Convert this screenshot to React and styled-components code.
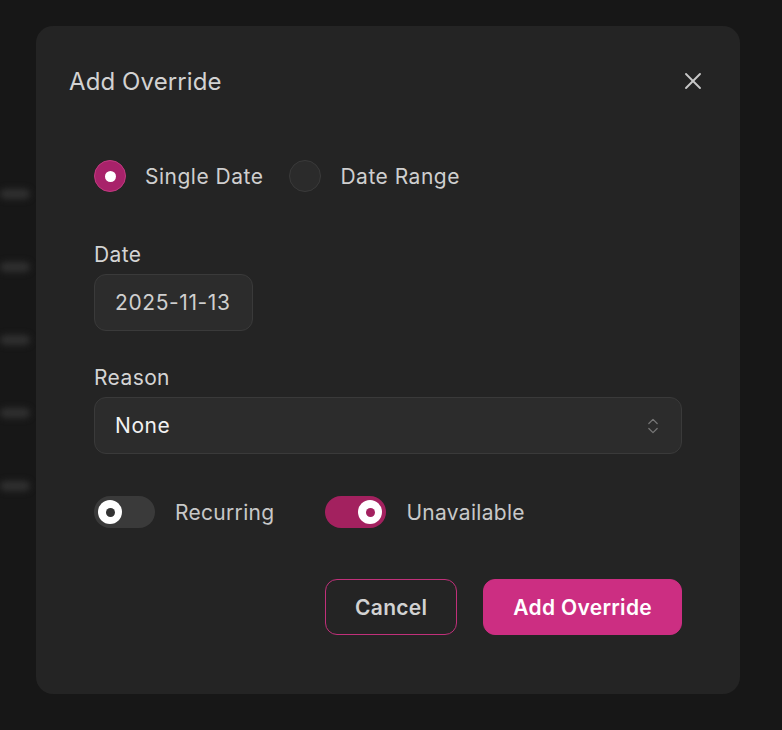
import styled, { createGlobalStyle } from 'styled-components';
import { X, ChevronsUpDown } from 'lucide-react';

const GlobalStyle = createGlobalStyle`
  * { box-sizing: border-box; }
  html, body {
    margin: 0;
    background: #171717;
    font-family: Inter, "Noto Sans", "Liberation Sans", sans-serif;
  }
`;

const Page = styled.div`
  position: relative;
  width: 782px;
  height: 730px;
  overflow: hidden;
  background: #171717;
`;

const Backdrop = styled.aside`
  display: flex;
  flex-direction: column;
  gap: 63px;
  padding: 189px 0 0 0;
  filter: blur(3px);
`;

const Blob = styled.div`
  width: ${(p) => p.w || 30}px;
  height: 10px;
  border-radius: 5px;
  background: #303030;
`;

const Overlay = styled.div`
  position: absolute;
  inset: 0;
  display: flex;
  align-items: flex-start;
  padding: 26px 0 0 36px;
`;

const Modal = styled.div`
  width: 704px;
  height: 668px;
  background: #242424;
  border-radius: 17px;
  padding: 40px 33px 0 33px;
  display: flex;
  flex-direction: column;
`;

const Header = styled.div`
  display: flex;
  align-items: center;
  justify-content: space-between;
  height: 30px;
`;

const Title = styled.h2`
  margin: 0;
  font-size: 24px;
  font-weight: 400;
  color: #d2d2d2;
  letter-spacing: 0.1px;
`;

const Close = styled.button`
  border: 0;
  background: none;
  padding: 0;
  display: flex;
  color: #c8c8c8;
  cursor: pointer;
`;

const Body = styled.div`
  display: flex;
  flex-direction: column;
  padding: 64px 25px 0 25px;
`;

const RadioRow = styled.div`
  display: flex;
  align-items: center;
`;

const RadioItem = styled.label`
  display: flex;
  align-items: center;
  gap: 19px;
  margin-right: 26px;
  font-size: 21px;
  letter-spacing: 0.5px;
  color: #cfcfcf;
`;

const RadioDot = styled.span`
  width: 32px;
  height: 32px;
  border-radius: 50%;
  display: flex;
  align-items: center;
  justify-content: center;
  background: ${(p) => (p.checked ? '#a8226a' : '#2b2b2b')};
  border: 1px solid ${(p) => (p.checked ? '#c23a80' : '#3a3a3a')};
  &::after {
    content: '';
    display: ${(p) => (p.checked ? 'block' : 'none')};
    width: 11px;
    height: 11px;
    border-radius: 50%;
    background: #ffffff;
  }
`;

const Field = styled.div`
  display: flex;
  flex-direction: column;
  align-items: flex-start;
  gap: 7px;
  margin-top: ${(p) => p.top}px;
`;

const Label = styled.div`
  font-size: 21px;
  line-height: 24px;
  letter-spacing: 0.4px;
  color: #d4d4d4;
`;

const Input = styled.div`
  height: 57px;
  width: ${(p) => (p.full ? '100%' : 'auto')};
  display: flex;
  align-items: center;
  justify-content: space-between;
  padding: 0 21px 0 20px;
  background: #2c2c2c;
  border: 1px solid #3a3a3a;
  border-radius: 12px;
  font-size: 21px;
  color: ${(p) => (p.bright ? '#f2f2f2' : '#cfcfcf')};
  letter-spacing: 0.6px;
`;

const Chevron = styled.span`
  display: flex;
  color: #767676;
  margin-right: -3px;
`;

const ToggleRow = styled.div`
  display: flex;
  align-items: center;
  margin-top: 42px;
`;

const ToggleItem = styled.label`
  display: flex;
  align-items: center;
  gap: 20px;
  margin-right: 51px;
  font-size: 21px;
  letter-spacing: 0.3px;
  color: #c8c8c8;
`;

const Track = styled.span`
  width: 61px;
  height: 32px;
  border-radius: 16px;
  padding: 4px;
  display: flex;
  justify-content: ${(p) => (p.on ? 'flex-end' : 'flex-start')};
  background: ${(p) => (p.on ? '#a3215f' : '#3a3a3a')};
`;

const Knob = styled.span`
  width: 24px;
  height: 24px;
  border-radius: 50%;
  background: #ffffff;
  display: flex;
  align-items: center;
  justify-content: center;
  &::after {
    content: '';
    width: 9px;
    height: 9px;
    border-radius: 50%;
    background: ${(p) => (p.on ? '#a3215f' : '#333333')};
  }
`;

const Actions = styled.div`
  display: flex;
  justify-content: flex-end;
  gap: 26px;
  margin-top: 51px;
`;

const Button = styled.button`
  height: 56px;
  padding: 0 29px;
  border-radius: 12px;
  font-family: inherit;
  font-size: 21px;
  font-weight: 600;
  letter-spacing: 0.3px;
  cursor: pointer;
  color: ${(p) => (p.primary ? '#ffffff' : '#d2d2d2')};
  background: ${(p) => (p.primary ? '#cc2e82' : 'transparent')};
  border: 1px solid ${(p) => (p.primary ? '#cc2e82' : '#c0307a')};
`;

export default function App() {
  return (
    <Page>
      <GlobalStyle />
      <Backdrop>
        {[30, 30, 30, 30, 30].map((w, i) => (
          <Blob key={i} w={w} />
        ))}
      </Backdrop>
      <Overlay>
        <Modal>
          <Header>
            <Title>Add Override</Title>
            <Close aria-label="Close">
              <X size={28} strokeWidth={1.6} />
            </Close>
          </Header>
          <Body>
            <RadioRow>
              <RadioItem>
                <RadioDot checked />
                Single Date
              </RadioItem>
              <RadioItem>
                <RadioDot />
                Date Range
              </RadioItem>
            </RadioRow>

            <Field top={51}>
              <Label>Date</Label>
              <Input>2025-11-13</Input>
            </Field>

            <Field top={35}>
              <Label>Reason</Label>
              <Input full bright>
                None
                <Chevron>
                  <ChevronsUpDown size={20} strokeWidth={1.5} />
                </Chevron>
              </Input>
            </Field>

            <ToggleRow>
              <ToggleItem>
                <Track>
                  <Knob />
                </Track>
                Recurring
              </ToggleItem>
              <ToggleItem>
                <Track on>
                  <Knob on />
                </Track>
                Unavailable
              </ToggleItem>
            </ToggleRow>

            <Actions>
              <Button>Cancel</Button>
              <Button primary>Add Override</Button>
            </Actions>
          </Body>
        </Modal>
      </Overlay>
    </Page>
  );
}
